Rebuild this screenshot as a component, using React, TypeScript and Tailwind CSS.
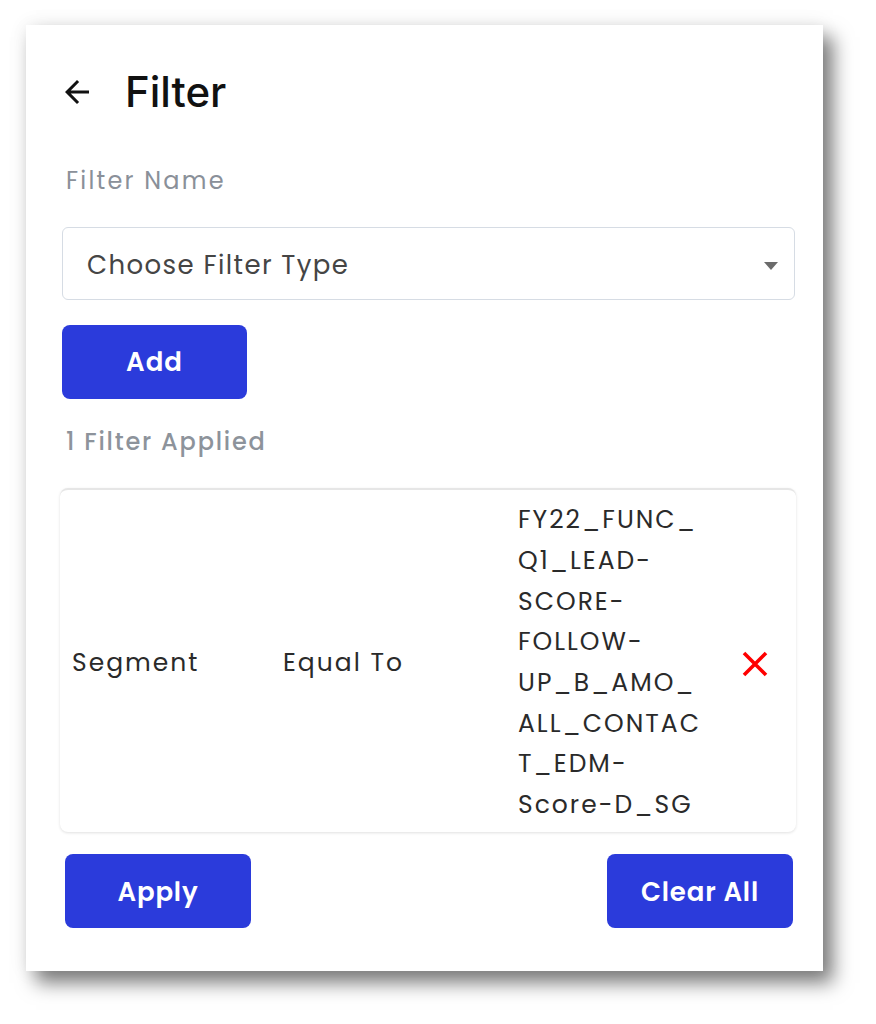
import { MdArrowBack } from "react-icons/md";

const valueLines = [
  "FY22_FUNC_",
  "Q1_LEAD-",
  "SCORE-",
  "FOLLOW-",
  "UP_B_AMO_",
  "ALL_CONTAC",
  "T_EDM-",
  "Score-D_SG",
];

const body = "font-['Poppins','Open_Sans',sans-serif]";

const App = () => {
  return (
    <div className="min-h-screen w-full bg-white pt-[25px] pl-[26px]">
      <div
        className={`flex h-[946px] w-[797px] flex-col bg-white pl-[36px] pr-[28px] shadow-[0_0_18px_rgba(0,0,0,0.08),10px_12px_18px_rgba(0,0,0,0.5)] ${body}`}
      >
        {/* header */}
        <div className="mt-[43px] flex h-12 items-center">
          <MdArrowBack size={36} className="-ml-[3px] text-[#111]" />
          <h1 className="ml-[30px] font-['Inter',sans-serif] text-[42px] font-medium leading-none text-[#111]">
            Filter
          </h1>
        </div>

        <label className="mt-[49px] ml-[4px] h-8 text-[24px] leading-8 tracking-[2.2px] text-[#8a9099]">
          Filter Name
        </label>

        <button className="mt-[30px] flex h-[73px] w-full items-center justify-between rounded-md border border-[#d6dce4] bg-white pt-[4px] pl-[24px] pr-[16px] text-left">
          <span className="text-[26px] tracking-[1.4px] text-[#454545]">
            Choose Filter Type
          </span>
          <svg width="14" height="8" viewBox="0 0 14 8">
            <polygon points="0,0 14,0 7,8" fill="#6b6b6b" />
          </svg>
        </button>

        <button className="mt-[25px] h-[74px] w-[185px] rounded-lg bg-[#2b3bdb] text-[26px] font-semibold tracking-[1px] text-white">
          Add
        </button>

        <p className="mt-[27px] ml-[4px] h-8 text-[24px] font-medium leading-8 tracking-[1.8px] text-[#8d939b]">
          1 Filter Applied
        </p>

        {/* applied filters */}
        <div className="mt-[30px] -ml-[2px] h-[344px] w-[736px] rounded-lg border-t-2 border-[#e6e6e6] bg-white shadow-[0_1px_3px_rgba(0,0,0,0.12)]">
          <div className="grid h-full grid-cols-[211px_235px_224px_1fr] items-center pl-[12px] pt-[10px] pb-[6px] text-[25px] tracking-[2px] text-[#2a2a2a]">
            <span>Segment</span>
            <span>Equal To</span>
            <div className="leading-[40.7px]">
              {valueLines.map((line) => (
                <div key={line}>{line}</div>
              ))}
            </div>
            <svg width="26" height="26" viewBox="0 0 26 26" className="mt-[2px]">
              <path
                d="M2 2L24 24M24 2L2 24"
                stroke="#ff0000"
                strokeWidth="3.6"
              />
            </svg>
          </div>
        </div>

        <div className="mt-[22px] flex justify-between pl-[3px] pr-[2px]">
          <button className="h-[74px] w-[186px] rounded-lg bg-[#2b3bdb] pt-[3px] text-[26px] font-semibold tracking-[0.8px] text-white">
            Apply
          </button>
          <button className="h-[74px] w-[186px] rounded-lg bg-[#2b3bdb] pt-[3px] text-[26px] font-semibold tracking-[0.8px] text-white">
            Clear All
          </button>
        </div>
      </div>
    </div>
  );
};

export default App;
